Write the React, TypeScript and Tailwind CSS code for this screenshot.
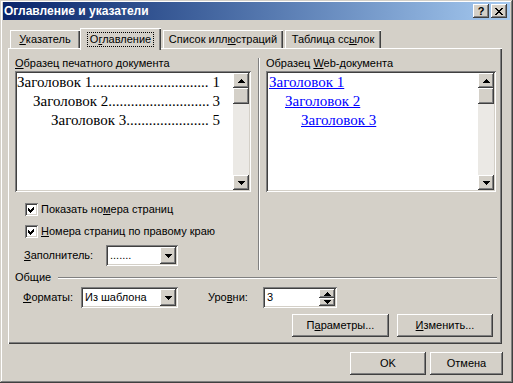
import React from "react";

const raised =
  "bg-[#d4d0c8] shadow-[inset_-1px_-1px_#404040,inset_1px_1px_#ffffff,inset_-2px_-2px_#808080,inset_2px_2px_#d4d0c8]";
const sunken =
  "bg-white shadow-[inset_1px_1px_#808080,inset_-1px_-1px_#ffffff,inset_2px_2px_#404040,inset_-2px_-2px_#d4d0c8]";
const tabShadow =
  "shadow-[inset_1px_1px_#ffffff,inset_-1px_0_#404040,inset_-2px_0_#808080]";

function Down() {
  return (
    <svg width="7" height="4" viewBox="0 0 7 4" shapeRendering="crispEdges">
      <path d="M0 0h7v1h-1v1h-1v1h-1v1h-1v-1h-1v-1h-1v-1h-1z" fill="#000" />
    </svg>
  );
}

function Up() {
  return (
    <svg width="7" height="4" viewBox="0 0 7 4" shapeRendering="crispEdges">
      <path d="M3 0h1v1h1v1h1v1h1v1h-7v-1h1v-1h1v-1h1z" fill="#000" />
    </svg>
  );
}

function Scrollbar() {
  return (
    <div className="flex h-full w-[16px] shrink-0 flex-col bg-[#ebe9e5]">
      <div className={`flex h-[15px] w-[16px] items-center justify-center ${raised}`}>
        <Up />
      </div>
      <div className={`h-[16px] w-[16px] ${raised}`} />
      <div className="flex-1" />
      <div className={`flex h-[15px] w-[16px] items-center justify-center ${raised}`}>
        <Down />
      </div>
    </div>
  );
}

function Combo({ w, value }: { w: string; value: string }) {
  return (
    <div className={`flex h-[21px] p-[2px] ${sunken} ${w}`}>
      <div className="flex flex-1 items-center pl-[2px]">{value}</div>
      <div className={`flex h-[17px] w-[16px] items-center justify-center ${raised}`}>
        <Down />
      </div>
    </div>
  );
}

function Check({ children }: { children: React.ReactNode }) {
  return (
    <div className="flex h-[13px] items-center pl-[10px]">
      <div className={`h-[13px] w-[13px] ${sunken}`}>
        <svg width="13" height="13" viewBox="0 0 13 13" shapeRendering="crispEdges">
          <path d="M3 5l2 2l4-4v3l-4 4l-2-2z" fill="#000" />
        </svg>
      </div>
      <span className="ml-[3px]">{children}</span>
    </div>
  );
}

function Btn({ w, children }: { w: string; children: React.ReactNode }) {
  return (
    <div className={`flex h-[23px] items-center justify-center ${raised} ${w}`}>
      {children}
    </div>
  );
}

function Toc({ pl, label, dots, page }: { pl: string; label: string; dots: string; page: string }) {
  return (
    <div className={`flex h-[19px] items-center justify-between whitespace-nowrap ${pl}`}>
      <span>
        {label}
        {dots}
      </span>
      <span>{page}</span>
    </div>
  );
}

export default function App() {
  return (
    <div className="h-[383px] w-[513px] bg-[#d4d0c8] px-[3px] pt-[2px] font-['Liberation_Sans',Arial,sans-serif] text-[11px] leading-[13px] text-black shadow-[inset_-1px_-1px_#404040,inset_1px_1px_#d4d0c8,inset_-2px_-2px_#808080,inset_2px_2px_#ffffff]">
      {/* title bar */}
      <div className="flex h-[18px] items-center bg-linear-to-r from-[#0a246a] to-[#a6caf0] pl-[1px] pr-[3px]">
        <span className="flex-1 text-[12px] font-bold text-white">Оглавление и указатели</span>
        <div className={`flex h-[14px] w-[16px] items-center justify-center font-bold ${raised}`}>
          ?
        </div>
        <div className={`ml-[2px] flex h-[14px] w-[16px] items-center justify-center ${raised}`}>
          <svg width="8" height="7" viewBox="0 0 8 7" shapeRendering="crispEdges">
            <path
              d="M0 0h2v1h1v1h2v-1h1v-1h2v1h-1v1h-1v1h-1v1h1v1h1v1h1v1h-2v-1h-1v-1h-2v1h-1v1h-2v-1h1v-1h1v-1h1v-1h-1v-1h-1v-1h-1z"
              fill="#000"
            />
          </svg>
        </div>
      </div>

      {/* tabs */}
      <div className="mt-[8px] ml-[7px] flex h-[20px] items-end">
        <div className={`flex h-[18px] w-[70px] items-center justify-center ${tabShadow}`}>
          <span>
            <span className="underline">У</span>казатель
          </span>
        </div>
        <div
          className={`relative z-10 -mb-[2px] flex h-[22px] w-[81px] items-start justify-center bg-[#d4d0c8] pt-[4px] ${tabShadow}`}
        >
          <span className="border border-dotted border-black px-[2px]">
            О<span className="underline">г</span>лавление
          </span>
        </div>
        <div className={`ml-[2px] flex h-[18px] w-[120px] items-center justify-center ${tabShadow}`}>
          <span>
            Список илл<span className="underline">ю</span>страций
          </span>
        </div>
        <div className={`ml-[2px] flex h-[18px] w-[96px] items-center justify-center ${tabShadow}`}>
          <span>
            Таблица сс<span className="underline">ы</span>лок
          </span>
        </div>
      </div>

      {/* panel */}
      <div className="ml-[5px] flex h-[296px] w-[494px] flex-col shadow-[inset_1px_1px_#ffffff,inset_-1px_-1px_#404040,inset_-2px_-2px_#808080]">
        <div className="flex items-start">
          <div className="mt-[9px] ml-[7px] flex w-[236px] flex-col">
            <div className="h-[14px]">
              <span className="underline">О</span>бразец печатного документа
            </div>
            <div className={`flex h-[121px] p-[2px] ${sunken}`}>
              <div className="min-w-0 flex-1 pr-[13px] font-['Liberation_Serif','Times_New_Roman',serif] text-[15px]">
                <Toc pl="pl-[0px]" label="Заголовок 1" dots="..............................." page="1" />
                <Toc pl="pl-[16px]" label="Заголовок 2" dots="..........................." page="3" />
                <Toc pl="pl-[34px]" label="Заголовок 3" dots="......................" page="5" />
              </div>
              <Scrollbar />
            </div>
            <div className="mt-[11px]">
              <Check>
                Показать но<span className="underline">м</span>ера страниц
              </Check>
            </div>
            <div className="mt-[9px]">
              <Check>
                <span className="underline">Н</span>омера страниц по правому краю
              </Check>
            </div>
            <div className="mt-[7px] flex items-center pl-[9px]">
              <span className="w-[82px]">
                <span className="underline">З</span>аполнитель:
              </span>
              <Combo w="w-[72px]" value="......." />
            </div>
          </div>

          <div className="mt-[10px] ml-[7px] h-[212px] w-[2px] border-r border-l border-r-white border-l-[#808080]" />

          <div className="mt-[9px] ml-[6px] flex w-[230px] flex-col">
            <div className="h-[14px]">
              Образец <span className="underline">W</span>eb-документа
            </div>
            <div className={`flex h-[121px] p-[2px] ${sunken}`}>
              <div className="min-w-0 flex-1 font-['Liberation_Serif','Times_New_Roman',serif] text-[15px] text-[#0000ff]">
                <div className="flex h-[19px] items-center pl-[1px]">
                  <span className="underline">Заголовок 1</span>
                </div>
                <div className="flex h-[19px] items-center pl-[17px]">
                  <span className="underline">Заголовок 2</span>
                </div>
                <div className="flex h-[19px] items-center pl-[33px]">
                  <span className="underline">Заголовок 3</span>
                </div>
              </div>
              <Scrollbar />
            </div>
          </div>
        </div>

        {/* group */}
        <div className="mt-[1px] mr-[5px] ml-[7px] flex h-[13px] items-center">
          <span>Общие</span>
          <div className="ml-[7px] h-[2px] flex-1 border-t border-b border-t-[#808080] border-b-white" />
        </div>

        <div className="mt-[3px] ml-[15px] flex items-center">
          <span className="w-[58px]">
            <span className="underline">Ф</span>орматы:
          </span>
          <Combo w="w-[97px]" value="Из шаблона" />
          <span className="ml-[30px] w-[55px]">
            Уро<span className="underline">в</span>ни:
          </span>
          <div className={`flex h-[21px] w-[74px] p-[2px] ${sunken}`}>
            <div className="flex flex-1 items-center pl-[2px]">3</div>
            <div className="flex w-[16px] flex-col">
              <div className={`flex h-[9px] items-center justify-center ${raised}`}>
                <Up />
              </div>
              <div className={`flex h-[8px] items-center justify-center ${raised}`}>
                <Down />
              </div>
            </div>
          </div>
        </div>

        <div className="mt-[6px] flex justify-end gap-[8px] pr-[9px]">
          <Btn w="w-[97px]">
            <span>
              П<span className="underline">а</span>раметры...
            </span>
          </Btn>
          <Btn w="w-[96px]">
            <span>
              <span className="underline">И</span>зменить...
            </span>
          </Btn>
        </div>
      </div>

      {/* dialog buttons */}
      <div className="mt-[8px] flex justify-end gap-[4px] pr-[7px]">
        <Btn w="w-[76px]">OK</Btn>
        <Btn w="w-[73px]">Отмена</Btn>
      </div>
    </div>
  );
}
